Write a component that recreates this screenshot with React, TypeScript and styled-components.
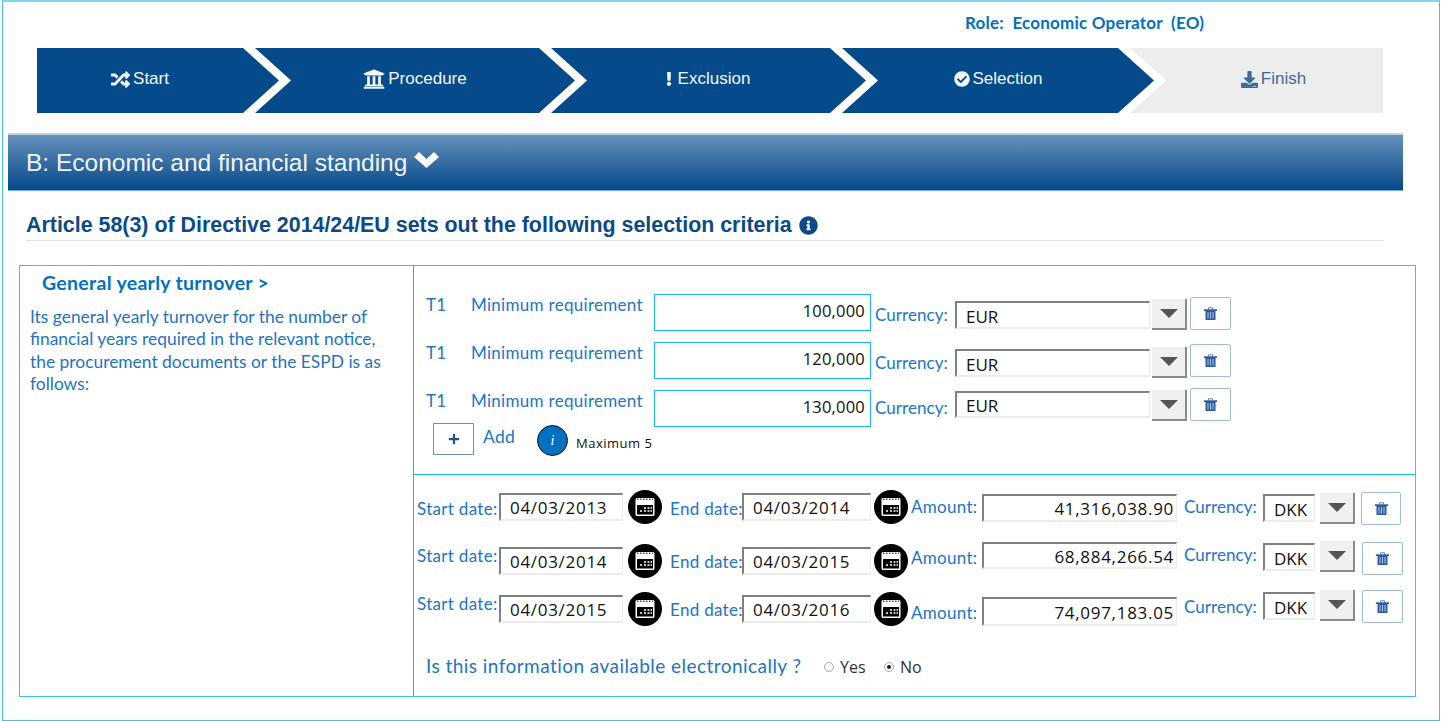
import React from 'react';
import styled, { createGlobalStyle } from 'styled-components';
import {
  FaCheckCircle,
  FaDownload,
  FaExclamation,
  FaInfoCircle,
  FaPlus,
  FaRandom,
  FaUniversity,
} from 'react-icons/fa';

const GlobalStyle = createGlobalStyle`
  html, body { margin: 0; padding: 0; background: #fff; }
  * { box-sizing: border-box; }
`;

const BLUE = '#0070c0';

const Frame = styled.div`
  margin-left: 2px;
  width: 1438px;
  height: 721px;
  border: 1px solid #38c0f0;
  border-top: 2px solid #7dd8f5;
  overflow: hidden;
  font-family: Lato, 'Liberation Sans', sans-serif;
`;

const RoleBar = styled.div`
  height: 46px;
  padding: 11px 0 0 962px;
  font-size: 17px;
  font-weight: 700;
  line-height: 20px;
  letter-spacing: 0.2px;
  color: ${BLUE};
  white-space: pre;
`;

const Stepper = styled.div`
  display: flex;
  margin-left: 34px;
  height: 65px;
`;

const Step = styled.div<{ $w: number; $first?: boolean; $last?: boolean; $pad?: string }>`
  width: ${(p) => p.$w}px;
  margin-left: ${(p) => (p.$first ? 0 : -24)}px;
  padding: ${(p) => p.$pad || '0 0 3px'};
  display: flex;
  align-items: center;
  justify-content: center;
  gap: 3px;
  font-family: 'Liberation Sans', sans-serif;
  font-size: 17px;
  color: ${(p) => (p.$last ? '#3f6b98' : '#f4f7fa')};
  background: ${(p) => (p.$last ? '#ededed' : '#054a8b')};
  clip-path: ${(p) =>
    p.$first
      ? 'polygon(0 0, calc(100% - 36px) 0, 100% 50%, calc(100% - 36px) 100%, 0 100%)'
      : p.$last
        ? 'polygon(0 0, 100% 0, 100% 100%, 0 100%, 36px 50%)'
        : 'polygon(0 0, calc(100% - 36px) 0, 100% 50%, calc(100% - 36px) 100%, 0 100%, 36px 50%)'};
  svg { flex: none; }
`;

const BangIcon = styled(FaExclamation)`
  margin-right: -1px;
`;

const Band = styled.div`
  margin: 20px 0 0 5px;
  width: 1395px;
  height: 58px;
  padding-left: 18px;
  display: flex;
  align-items: center;
  gap: 7px;
  border-top: 2px solid #c3d0de;
  border-bottom: 1px solid #6fa8dc;
  background: linear-gradient(#6690ba, #054a8b);
  font-family: 'Liberation Sans', sans-serif;
  font-size: 24.5px;
  color: #f2f6fa;
`;

const BandChevron = styled.svg`
  width: 25px;
  height: 16px;
  margin-top: -6px;
  flex: none;
`;

const ArticleHeading = styled.div`
  margin-left: 23px;
  width: 1358px;
  height: 50px;
  padding-top: 20px;
  display: flex;
  align-items: center;
  gap: 7px;
  border-bottom: 1px solid #e4e4e4;
  font-family: 'Liberation Sans', sans-serif;
  font-size: 21.4px;
  font-weight: 700;
  color: #0b4a8a;
`;

const Table = styled.div`
  margin: 24px 0 0 16px;
  width: 1397px;
  height: 432px;
  display: flex;
  border: 1px solid #38c0f0;
`;

const LeftCell = styled.div`
  width: 394px;
  padding: 6px 0 0 10px;
  border-right: 1px solid #19b4ee;
`;

const CellTitle = styled.div`
  margin-left: 12px;
  font-size: 19.5px;
  font-weight: 700;
  line-height: 22px;
  letter-spacing: 0.3px;
  color: ${BLUE};
`;

const CellText = styled.p`
  margin: 12px 0 0;
  max-width: 362px;
  font-size: 17.4px;
  line-height: 22.3px;
  color: #1f73c4;
`;

const RightCell = styled.div`
  flex: 1;
  display: flex;
  flex-direction: column;
`;

const TopPanel = styled.div`
  height: 209px;
  padding: 22px 0 0 12px;
  border-bottom: 1px solid #19b4ee;
`;

const BottomPanel = styled.div`
  flex: 1;
  padding: 15px 0 0 3px;
`;

const Row = styled.div<{ $h: number }>`
  display: flex;
  align-items: flex-start;
  height: ${(p) => p.$h}px;
`;

const Label = styled.div<{ $top: number; $w: number; $left?: number; $tight?: boolean }>`
  width: ${(p) => p.$w}px;
  margin: ${(p) => p.$top}px 0 0 ${(p) => p.$left || 0}px;
  flex: none;
  font-size: 17px;
  line-height: 22px;
  letter-spacing: ${(p) => (p.$tight ? 0.05 : 0.3)}px;
  color: #1b75c9;
  white-space: nowrap;
`;

const RequirementBox = styled.div<{ $top: number }>`
  width: 217px;
  height: 37px;
  margin-top: ${(p) => p.$top}px;
  flex: none;
  padding: 0 5px 4px 0;
  display: flex;
  align-items: center;
  justify-content: flex-end;
  border: 1px solid #19b4ee;
  font-family: 'Open Sans', sans-serif;
  font-size: 16.5px;
  letter-spacing: 0.2px;
  color: #111;
`;

const InsetBox = styled.div<{
  $top: number;
  $w: number;
  $h?: number;
  $left?: number;
  $right?: boolean;
  $spaced?: boolean;
}>`
  width: ${(p) => p.$w}px;
  height: ${(p) => p.$h || 28}px;
  margin: ${(p) => p.$top}px 0 0 ${(p) => p.$left || 0}px;
  flex: none;
  display: flex;
  align-items: center;
  justify-content: ${(p) => (p.$right ? 'flex-end' : 'flex-start')};
  padding: ${(p) => (p.$spaced ? 1 : 2)}px ${(p) => (p.$right ? 2 : 0)}px 0 ${(p) => (p.$right ? 0 : 9)}px;
  border-top: 2px solid #808080;
  border-left: 2px solid #808080;
  border-right: 1px solid #ececec;
  border-bottom: 2px solid #ececec;
  background: #fff;
  font-family: 'Open Sans', sans-serif;
  font-size: 17px;
  letter-spacing: ${(p) => (p.$spaced ? 0.7 : 0)}px;
  color: #111;
`;

const DropButton = styled.div<{ $top: number; $left: number; $h?: number }>`
  width: 35px;
  height: ${(p) => p.$h || 31}px;
  margin: ${(p) => p.$top}px 0 0 ${(p) => p.$left}px;
  flex: none;
  display: flex;
  align-items: center;
  justify-content: center;
  background: #f0f0f0;
  border-right: 2px solid #8a8a8a;
  border-bottom: 2px solid #8a8a8a;
  &::after {
    content: '';
    border-left: 9px solid transparent;
    border-right: 9px solid transparent;
    border-top: 9px solid #555;
  }
`;

const TrashButton = styled.div<{ $top: number; $left: number; $w?: number; $h?: number }>`
  width: ${(p) => p.$w || 41}px;
  height: ${(p) => p.$h || 33}px;
  margin: ${(p) => p.$top}px 0 0 ${(p) => p.$left}px;
  flex: none;
  display: flex;
  align-items: center;
  justify-content: center;
  border: 1px solid #9dbce8;
  border-radius: 2px;
`;

const TrashSvg = styled.svg`
  width: 13px;
  height: 13px;
`;

const AddRow = styled.div`
  display: flex;
  align-items: flex-start;
  margin: -9px 0 0 7px;
`;

const AddButton = styled.div`
  width: 41px;
  height: 32px;
  display: flex;
  align-items: center;
  justify-content: center;
  border: 1px solid #6f8fb8;
  color: #23508f;
`;

const AddLabel = styled(Label)`
  font-size: 17.5px;
`;

const InfoDot = styled.div`
  width: 31px;
  height: 31px;
  margin: 2px 0 0 23px;
  flex: none;
  display: flex;
  align-items: center;
  justify-content: center;
  border: 1px solid #111;
  border-radius: 50%;
  background: ${BLUE};
  font-family: 'Liberation Serif', serif;
  font-style: italic;
  font-size: 14px;
  color: #fff;
`;

const MaxNote = styled.div`
  margin: 12px 0 0 8px;
  font-family: 'Open Sans', sans-serif;
  font-size: 13px;
  line-height: 16px;
  letter-spacing: 0.5px;
  white-space: nowrap;
  color: #111;
`;

const CalendarWrap = styled.svg<{ $top: number; $left: number }>`
  width: 34px;
  height: 34px;
  margin: ${(p) => p.$top}px 0 0 ${(p) => p.$left}px;
  flex: none;
`;

const Question = styled.div`
  display: flex;
  align-items: center;
  height: 24px;
  margin: 13px 0 0 9px;
`;

const QuestionText = styled.div`
  width: 398px;
  font-size: 19px;
  letter-spacing: 0.45px;
  color: #1b75c9;
  white-space: nowrap;
`;

const RadioLabel = styled.div<{ $w: number }>`
  width: ${(p) => p.$w}px;
  padding-top: 3px;
  display: flex;
  align-items: center;
  gap: 6px;
  font-family: 'Open Sans', sans-serif;
  font-size: 16px;
  color: #333;
`;

const RadioDot = styled.span<{ $on?: boolean }>`
  width: 10px;
  height: 10px;
  display: flex;
  align-items: center;
  justify-content: center;
  border: 1px solid #aaa;
  border-radius: 50%;
  &::after {
    content: '';
    width: 4px;
    height: 4px;
    border-radius: 50%;
    background: ${(p) => (p.$on ? '#222' : 'transparent')};
  }
`;

const Calendar = ({ top, left }: { top: number; left: number }) => (
  <CalendarWrap $top={top} $left={left} viewBox="0 0 34 34">
    <circle cx="17" cy="17" r="17" fill="#000" />
    <rect x="7.5" y="8" width="19" height="18" rx="1.5" fill="#fff" />
    <path d="M9 9.2h16" stroke="#000" strokeWidth="1" strokeDasharray="1.5 1.5" />
    <rect x="9" y="15" width="16" height="9.5" fill="#000" />
    <path d="M16 18h2M19.5 18h2M22.5 18h1.5M12 21h2M16 21h2M19.5 21h2M22.5 21h1.5" stroke="#fff" strokeWidth="1.6" />
  </CalendarWrap>
);

const Trash = () => (
  <TrashSvg viewBox="0 0 13 13">
    <path d="M4.5 2.5V.8h4v1.7" fill="none" stroke="#6f7f9f" strokeWidth="1" />
    <rect x="0" y="2.3" width="13" height="1.7" fill="#2c5c9c" />
    <rect x="1.5" y="4" width="10" height="9" fill="#2c5c9c" />
    <path d="M4 5v6.5M6.5 5v6.5M9 5v6.5" stroke="#a9bfdd" strokeWidth="1.1" />
  </TrashSvg>
);

const requirements = [
  { value: '100,000', text: 6, box: 6, cur: 16, sel: 13, selH: 28, drop: 11, trash: 9 },
  { value: '120,000', text: 6, box: 6, cur: 16, sel: 13, selH: 28, drop: 11, trash: 8 },
  { value: '130,000', text: 6, box: 6, cur: 13, sel: 7, selH: 27, drop: 6, trash: 4 },
];

const periods = [
  {
    start: '04/03/2013', end: '04/03/2014', amount: '41,316,038.90',
    sl: 8, si: 3, cal: 0, el: 8, ei: 3, al: 6, ai: 4, aH: 28, cl: 6, dk: 4, dr: 3, tr: 2, trL: 6, trW: 40,
  },
  {
    start: '04/03/2014', end: '04/03/2015', amount: '68,884,266.54',
    sl: 5, si: 7, cal: 4, el: 11, ei: 7, al: 7, ai: 2, aH: 27, cl: 4, dk: 3, dr: 1, tr: 2, trL: 7, trW: 41,
  },
  {
    start: '04/03/2015', end: '04/03/2016', amount: '74,097,183.05',
    sl: 3, si: 5, cal: 2, el: 9, ei: 5, al: 12, ai: 7, aH: 29, cl: 6, dk: 2, dr: 0, tr: 0, trL: 7, trW: 41,
  },
];

export default function App() {
  return (
    <Frame>
      <GlobalStyle />
      <RoleBar>{'Role:  Economic Operator  (EO)'}</RoleBar>

      <Stepper>
        <Step $first $w={242} $pad="0 36px 3px 0">
          <FaRandom size={19} /> Start
        </Step>
        <Step $w={320}>
          <FaUniversity size={22} /> Procedure
        </Step>
        <Step $w={315} $pad="0 5px 3px 0">
          <BangIcon size={14} /> Exclusion
        </Step>
        <Step $w={312}>
          <FaCheckCircle size={16} /> Selection
        </Step>
        <Step $last $w={253} $pad="0 0 3px 34px">
          <FaDownload size={17} /> Finish
        </Step>
      </Stepper>

      <Band>
        B: Economic and financial standing
        <BandChevron viewBox="0 0 25 16">
          <path d="M0 5 5 0l7.5 7L20 0l5 5-12.5 11z" fill="#fff" />
        </BandChevron>
      </Band>

      <ArticleHeading>
        Article 58(3) of Directive 2014/24/EU sets out the following selection criteria
        <FaInfoCircle size={19} />
      </ArticleHeading>

      <Table>
        <LeftCell>
          <CellTitle>General yearly turnover &gt;</CellTitle>
          <CellText>
            Its general yearly turnover for the number of financial years required in the relevant
            notice, the procurement documents or the ESPD is as follows:
          </CellText>
        </LeftCell>

        <RightCell>
          <TopPanel>
            {requirements.map((r) => (
              <Row key={r.value} $h={48}>
                <Label $top={r.text} $w={45}>T1</Label>
                <Label $top={r.text} $w={183}>Minimum requirement</Label>
                <RequirementBox $top={r.box}>{r.value}</RequirementBox>
                <Label $top={r.cur} $w={80} $left={4} $tight>Currency:</Label>
                <InsetBox $top={r.sel} $w={195} $h={r.selH}>EUR</InsetBox>
                <DropButton $top={r.drop} $left={2} />
                <TrashButton $top={r.trash} $left={3}><Trash /></TrashButton>
              </Row>
            ))}
            <AddRow>
              <AddButton><FaPlus size={12} /></AddButton>
              <AddLabel $top={3} $w={31} $left={9}>Add</AddLabel>
              <InfoDot>i</InfoDot>
              <MaxNote>Maximum 5</MaxNote>
            </AddRow>
          </TopPanel>

          <BottomPanel>
            {periods.map((p) => (
              <Row key={p.start} $h={50}>
                <Label $top={p.sl} $w={82}>Start date:</Label>
                <InsetBox $top={p.si} $w={124} $spaced>{p.start}</InsetBox>
                <Calendar top={p.cal} left={5} />
                <Label $top={p.el} $w={72} $left={8}>End date:</Label>
                <InsetBox $top={p.ei} $w={129} $spaced>{p.end}</InsetBox>
                <Calendar top={p.cal} left={3} />
                <Label $top={p.al} $w={71} $left={3}>Amount:</Label>
                <InsetBox $top={p.ai} $w={195} $h={p.aH} $right $spaced>{p.amount}</InsetBox>
                <Label $top={p.cl} $w={79} $left={7} $tight>Currency:</Label>
                <InsetBox $top={p.dk} $w={52}>DKK</InsetBox>
                <DropButton $top={p.dr} $left={5} />
                <TrashButton $top={p.tr} $left={p.trL} $w={p.trW}><Trash /></TrashButton>
              </Row>
            ))}
            <Question>
              <QuestionText>Is this information available electronically ?</QuestionText>
              <RadioLabel $w={60}><RadioDot /> Yes</RadioLabel>
              <RadioLabel $w={50}><RadioDot $on /> No</RadioLabel>
            </Question>
          </BottomPanel>
        </RightCell>
      </Table>
    </Frame>
  );
}
